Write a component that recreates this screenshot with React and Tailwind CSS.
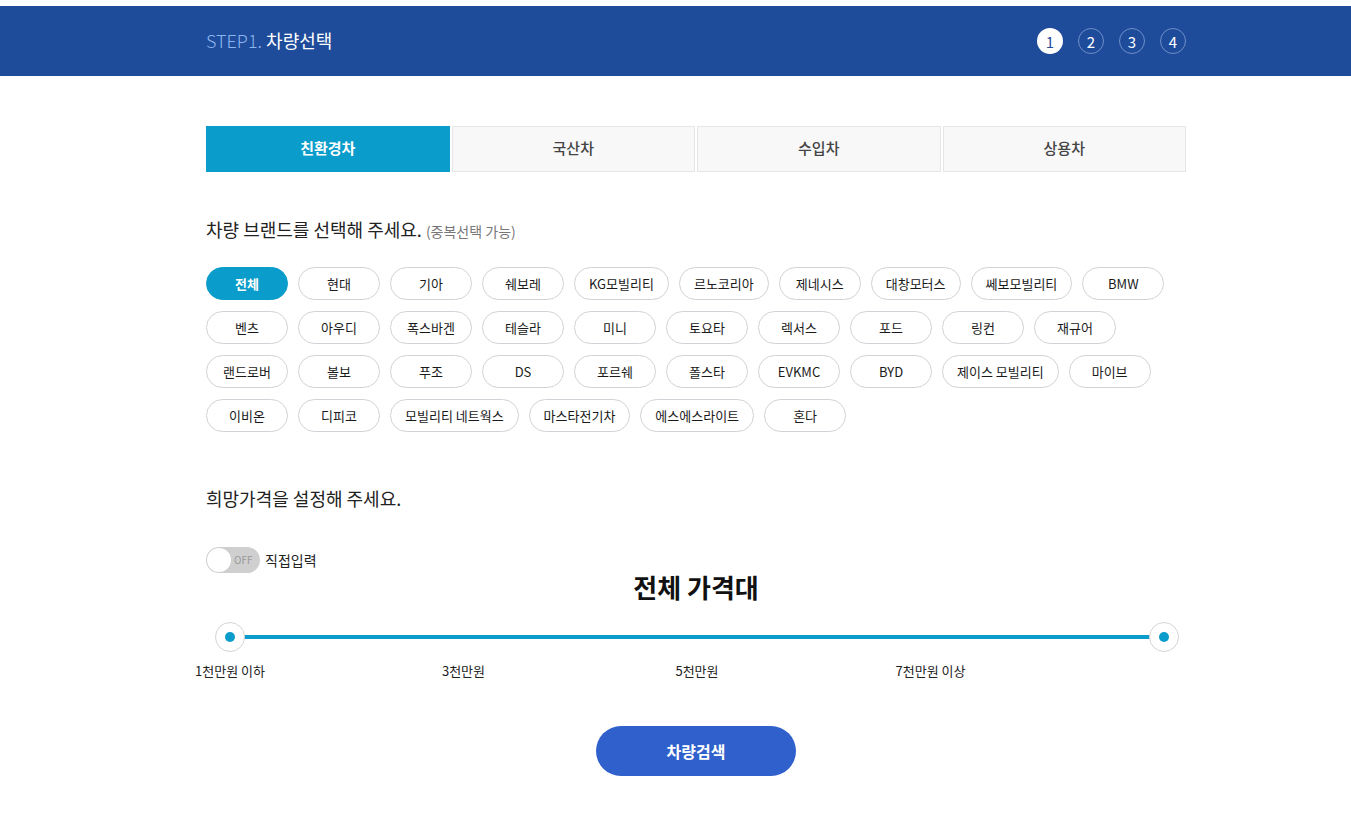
import { useState } from "react";

const TABS = ["친환경차", "국산차", "수입차", "상용차"];

const BRAND_ROWS = [
  ["전체", "현대", "기아", "쉐보레", "KG모빌리티", "르노코리아", "제네시스", "대창모터스", "쎄보모빌리티", "BMW"],
  ["벤츠", "아우디", "폭스바겐", "테슬라", "미니", "토요타", "렉서스", "포드", "링컨", "재규어"],
  ["랜드로버", "볼보", "푸조", "DS", "포르쉐", "폴스타", "EVKMC", "BYD", "제이스 모빌리티", "마이브"],
  ["이비온", "디피코", "모빌리티 네트웍스", "마스타전기차", "에스에스라이트", "혼다"],
];

const PRICE_LABELS = ["1천만원 이하", "3천만원", "5천만원", "7천만원 이상"];

const font = { fontFamily: '"Noto Sans CJK KR", "Noto Sans", sans-serif' };

const Handle = () => (
  <div className="w-[30px] h-[30px] shrink-0 rounded-full bg-white border border-[#d4d4d4] flex items-center justify-center z-10">
    <div className="w-[10px] h-[10px] rounded-full bg-[#0a9cca]" />
  </div>
);

export default function App() {
  const [tab, setTab] = useState(0);
  const [selected, setSelected] = useState(["전체"]);

  const toggleBrand = (b) => {
    setSelected((prev) =>
      prev.includes(b) ? prev.filter((x) => x !== b) : [...prev, b]
    );
  };

  return (
    <div className="min-h-screen bg-white text-[#222]" style={font}>
      {/* header */}
      <div className="mt-[6px] h-[70px] bg-[#1e4b9a]">
        <div className="w-[980px] ml-[206px] h-full flex items-center justify-between">
          <h1 className="text-[18px] leading-none pb-[2px]">
            <span className="text-[#8db6ee] font-light">STEP1.</span>{" "}
            <span className="text-white">차량선택</span>
          </h1>
          <div className="flex gap-[15px]">
            {[1, 2, 3, 4].map((n) => (
              <div
                key={n}
                className={
                  n === 1
                    ? "w-[26px] h-[26px] rounded-full bg-white text-[#1e4b9a] flex items-center justify-center text-[15px] leading-none"
                    : "w-[26px] h-[26px] rounded-full border border-[#6f8fca] text-white flex items-center justify-center text-[15px] leading-none"
                }
              >
                {n}
              </div>
            ))}
          </div>
        </div>
      </div>

      <div className="w-[980px] ml-[206px]">
        {/* tabs */}
        <div className="mt-[50px] grid grid-cols-4 gap-[2px]">
          {TABS.map((t, i) => (
            <button
              key={t}
              onClick={() => setTab(i)}
              className={
                i === tab
                  ? "h-[46px] pb-[2px] bg-[#0a9cca] text-white text-[15px] font-bold"
                  : "h-[46px] pb-[2px] bg-[#f8f8f9] border border-[#e6e6e6] text-[#444] text-[15px] font-medium"
              }
            >
              {t}
            </button>
          ))}
        </div>

        {/* brand */}
        <p className="mt-[44px] text-[18px] leading-[26px] text-[#222]">
          차량 브랜드를 선택해 주세요.{" "}
          <span className="text-[14px] text-[#777]">(중복선택 가능)</span>
        </p>

        <div className="mt-[23px] flex flex-col gap-[11px]">
          {BRAND_ROWS.map((row, ri) => (
            <div key={ri} className="flex gap-[10px]">
              {row.map((b) => {
                const on = selected.includes(b);
                return (
                  <button
                    key={b}
                    onClick={() => toggleBrand(b)}
                    className={
                      on
                        ? "h-[33px] min-w-[82px] px-[14px] rounded-full bg-[#0a9cca] border border-[#0a9cca] text-white text-[13px] font-bold"
                        : "h-[33px] min-w-[82px] px-[14px] rounded-full bg-white border border-[#d5d0d8] text-[#1a1a1a] text-[13px] font-normal"
                    }
                  >
                    {b}
                  </button>
                );
              })}
            </div>
          ))}
        </div>

        {/* price */}
        <p className="mt-[53px] text-[18px] leading-[26px] text-[#222]">
          희망가격을 설정해 주세요.
        </p>

        <div className="mt-[36px] flex items-center gap-[5px]">
          <div className="w-[54px] h-[26px] rounded-full bg-[#cfcfcf] flex items-center pl-[1px]">
            <div className="w-[24px] h-[24px] rounded-full bg-white" />
            <span className="ml-[3px] text-[10px] text-[#999] leading-none">OFF</span>
          </div>
          <span className="text-[14px] text-[#222]">직접입력</span>
        </div>

        <h2 className="text-center text-[26px] leading-[28px] font-bold text-[#111]">
          전체 가격대
        </h2>

        <div className="mt-[21px] ml-[9px] mr-[7px] flex items-center">
          <Handle />
          <div className="flex-1 h-[4px] bg-[#0a9cca] -mx-[1px]" />
          <Handle />
        </div>

        <div className="mt-[10px] ml-[24px] w-[934px] grid grid-cols-4 text-[13px] leading-[18px] text-[#222]">
          {PRICE_LABELS.map((l) => (
            <div key={l}>
              <span className="inline-block -translate-x-1/2 whitespace-nowrap">{l}</span>
            </div>
          ))}
        </div>

        <div className="mt-[46px] flex justify-center">
          <button className="w-[200px] h-[50px] rounded-full bg-[#2f60cc] text-white text-[16px] font-bold">
            차량검색
          </button>
        </div>
      </div>
    </div>
  );
}
